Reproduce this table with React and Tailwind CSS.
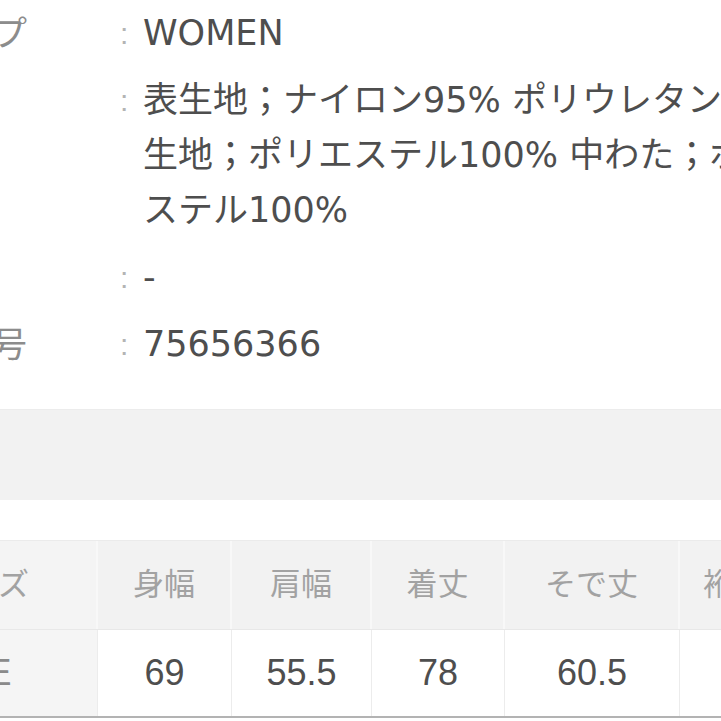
const specs = [
  { label: '性別タイプ', lines: ['WOMEN'] },
  {
    label: '素材',
    lines: ['表生地；ナイロン95% ポリウレタン5% 裏', '生地；ポリエステル100% 中わた；ポリエ', 'ステル100%'],
  },
  { label: '原産国', lines: ['-'] },
  { label: '管理品番号', lines: ['75656366'] },
]

const heads = ['サイズ', '身幅', '肩幅', '着丈', 'そで丈', '裄丈']
const values = ['FREE', '69', '55.5', '78', '60.5', '']

export default function App() {
  return (
    <div className="w-[721px] h-[721px] overflow-hidden bg-white font-['Liberation_Sans','Noto_Sans_CJK_JP',sans-serif]">
      {/* spec list */}
      <div className="flex flex-col gap-[12px] pt-[6px]">
        {specs.map((row) => (
          <div key={row.label} className="flex -ml-[148px] leading-[55px]">
            <div className="w-[268px] shrink-0 whitespace-nowrap text-[35px] text-[#8c8c8c]">{row.label}</div>
            <div className="w-[23px] shrink-0 text-[30px] text-[#b4b4b4]">:</div>
            <div className="whitespace-nowrap text-[35px] text-[#4e4e4e] font-['DejaVu_Sans','Noto_Sans_CJK_JP',sans-serif]">
              {row.lines.map((l) => (
                <div key={l}>{l}</div>
              ))}
            </div>
          </div>
        ))}
      </div>

      {/* blank grey band */}
      <div className="mt-[37px] h-[91px] bg-[#f2f2f2] border-t border-[#ececec]" />

      {/* size table */}
      <div className="mt-[40px] -ml-[130px] w-[1000px]">
        <div className="grid grid-cols-[228px_134px_140px_133px_175px_110px] h-[90px] bg-[#f2f2f2] border-t border-[#ebebeb] border-b border-b-[#e8e8e8]">
          {heads.map((h, i) => (
            <div
              key={h}
              className={
                i === 0
                  ? 'flex items-center justify-center border-r-2 border-[#f8f8f8] bg-[#f4f4f4] text-[31px] text-[#a2a2a2]'
                  : 'flex items-center justify-center whitespace-nowrap border-r-2 border-[#f8f8f8] text-[31px] text-[#a2a2a2]'
              }
            >
              {h}
            </div>
          ))}
        </div>
        <div className="grid grid-cols-[228px_134px_140px_133px_175px_110px] h-[88px] border-b-2 border-[#b3b3b3]">
          {values.map((v, i) => (
            <div
              key={i}
              className={
                i === 0
                  ? 'flex items-center justify-center pr-[40px] border-r border-[#ececec] bg-[#f5f5f5] text-[36px] text-[#8a8a8a]'
                  : 'flex items-center justify-center border-r border-[#ececec] text-[36px] text-[#4e4e4e]'
              }
            >
              {v}
            </div>
          ))}
        </div>
      </div>
    </div>
  )
}
